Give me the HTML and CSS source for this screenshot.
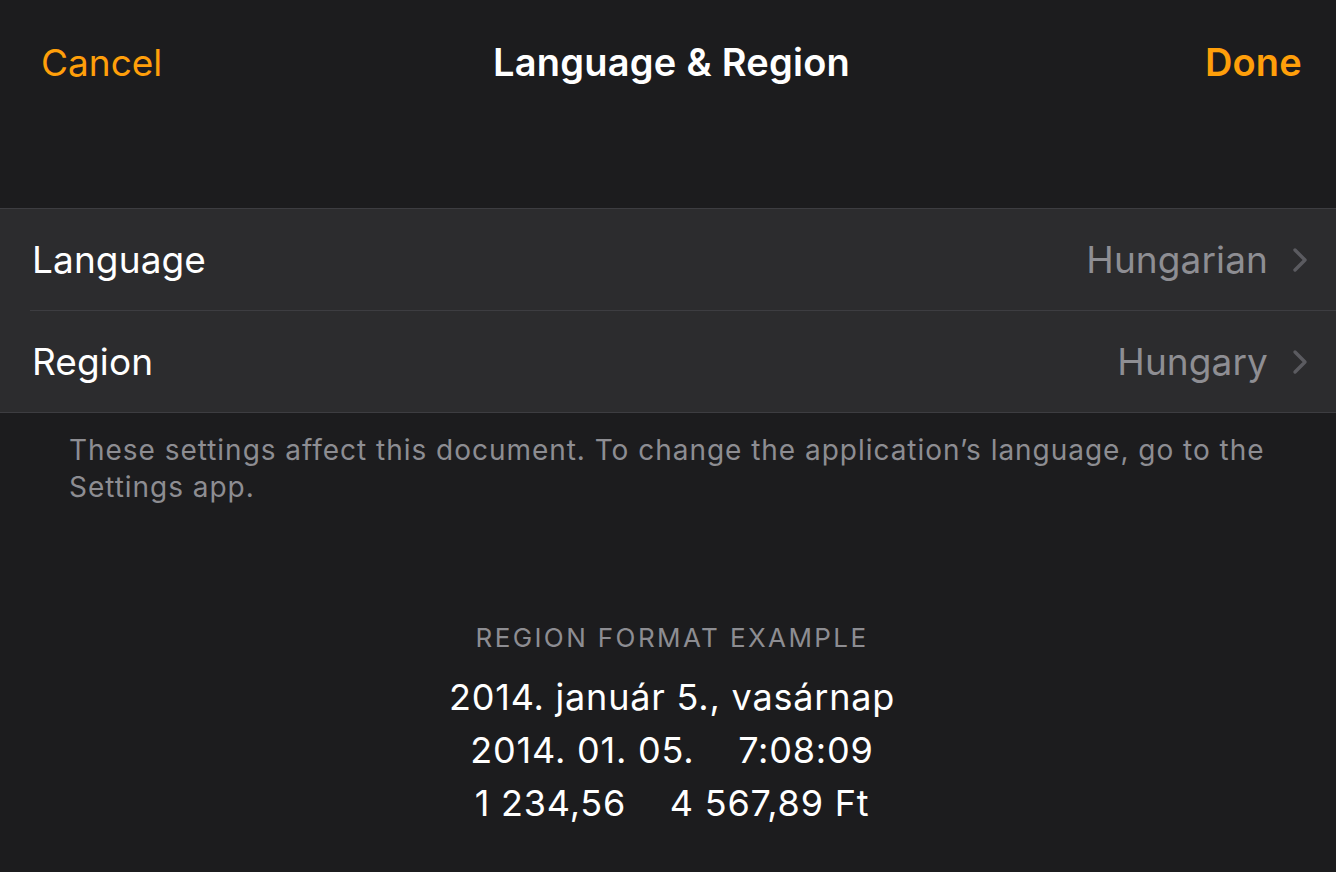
FILE: index.html
```html
<!DOCTYPE html>
<html lang="en">
<head>
<meta charset="utf-8">
<title>Language &amp; Region</title>
<link rel="stylesheet" href="styles.css">
</head>
<body>
<div class="screen">
  <header class="navbar">
    <span class="nav-btn cancel">Cancel</span>
    <span class="nav-title">Language &amp; Region</span>
    <span class="nav-btn done">Done</span>
  </header>
  <section class="group">
    <div class="row">
      <span class="row-label">Language</span>
      <span class="row-value">Hungarian</span>
      <svg class="chevron" viewBox="0 0 16 26" width="16" height="26"><path d="M3 3 L13 13 L3 23" fill="none" stroke="#5b5b60" stroke-width="3.4" stroke-linecap="round" stroke-linejoin="round"/></svg>
    </div>
    <div class="row">
      <span class="row-label">Region</span>
      <span class="row-value">Hungary</span>
      <svg class="chevron" viewBox="0 0 16 26" width="16" height="26"><path d="M3 3 L13 13 L3 23" fill="none" stroke="#5b5b60" stroke-width="3.4" stroke-linecap="round" stroke-linejoin="round"/></svg>
    </div>
  </section>
  <p class="footnote">These settings affect this document. To change the application’s language, go to the Settings app.</p>
  <section class="example">
    <div class="example-title">REGION FORMAT EXAMPLE</div>
    <div class="example-line">2014. január 5., vasárnap</div>
    <div class="example-line">2014. 01. 05.&nbsp;&nbsp;&nbsp;&nbsp;7:08:09</div>
    <div class="example-line">1 234,56&nbsp;&nbsp;&nbsp;&nbsp;4 567,89 Ft</div>
  </section>
</div>
</body>
</html>
```
FILE: styles.css
```css
html, body {
  margin: 0;
  padding: 0;
  background: #1c1c1e;
}
body {
  font-family: Inter, "Noto Sans", sans-serif;
  color: #ffffff;
  width: 1336px;
  height: 872px;
  overflow: hidden;
}
.screen {
  display: flex;
  flex-direction: column;
}
.navbar {
  height: 124px;
  padding: 0 34px 4px 41px;
  display: flex;
  align-items: center;
  justify-content: space-between;
  position: relative;
}
.nav-btn {
  font-size: 37px;
  color: #ff9f0a;
}
.done {
  font-size: 38px;
  font-weight: 600;
  letter-spacing: 0.2px;
}
.nav-title {
  position: absolute;
  left: 7px;
  right: 0;
  top: 0;
  bottom: 4px;
  display: flex;
  align-items: center;
  justify-content: center;
  font-size: 38px;
  font-weight: 600;
  letter-spacing: 0.25px;
  pointer-events: none;
}
.group {
  margin-top: 80px;
  background: #2c2c2e;
  border-top: 1px solid #3d3d41;
  border-bottom: 1px solid #3d3d41;
}
.row {
  height: 101px;
  display: flex;
  align-items: center;
  padding: 0 28px 0 32px;
}
.row + .row {
  border-top: 1px solid #3d3d41;
  margin-left: 30px;
  padding-left: 2px;
}
.row-label {
  font-size: 37px;
  letter-spacing: 0.1px;
  flex: 1;
}
.row-value {
  font-size: 37px;
  letter-spacing: 0.1px;
  color: #8e8e93;
  margin-right: 24px;
}
.chevron {
  display: block;
}
.footnote {
  margin: 19px 36px 0 69px;
  font-size: 28px;
  line-height: 37px;
  color: #8d8d92;
  letter-spacing: 0.97px;
}
.example {
  margin-top: 116px;
  padding-left: 8px;
  display: flex;
  flex-direction: column;
  align-items: center;
}
.example-title {
  font-size: 26px;
  color: #8d8d92;
  letter-spacing: 2.4px;
  margin-bottom: 18px;
}
.example-line {
  font-size: 36px;
  line-height: 53px;
  letter-spacing: 0.8px;
}
```
